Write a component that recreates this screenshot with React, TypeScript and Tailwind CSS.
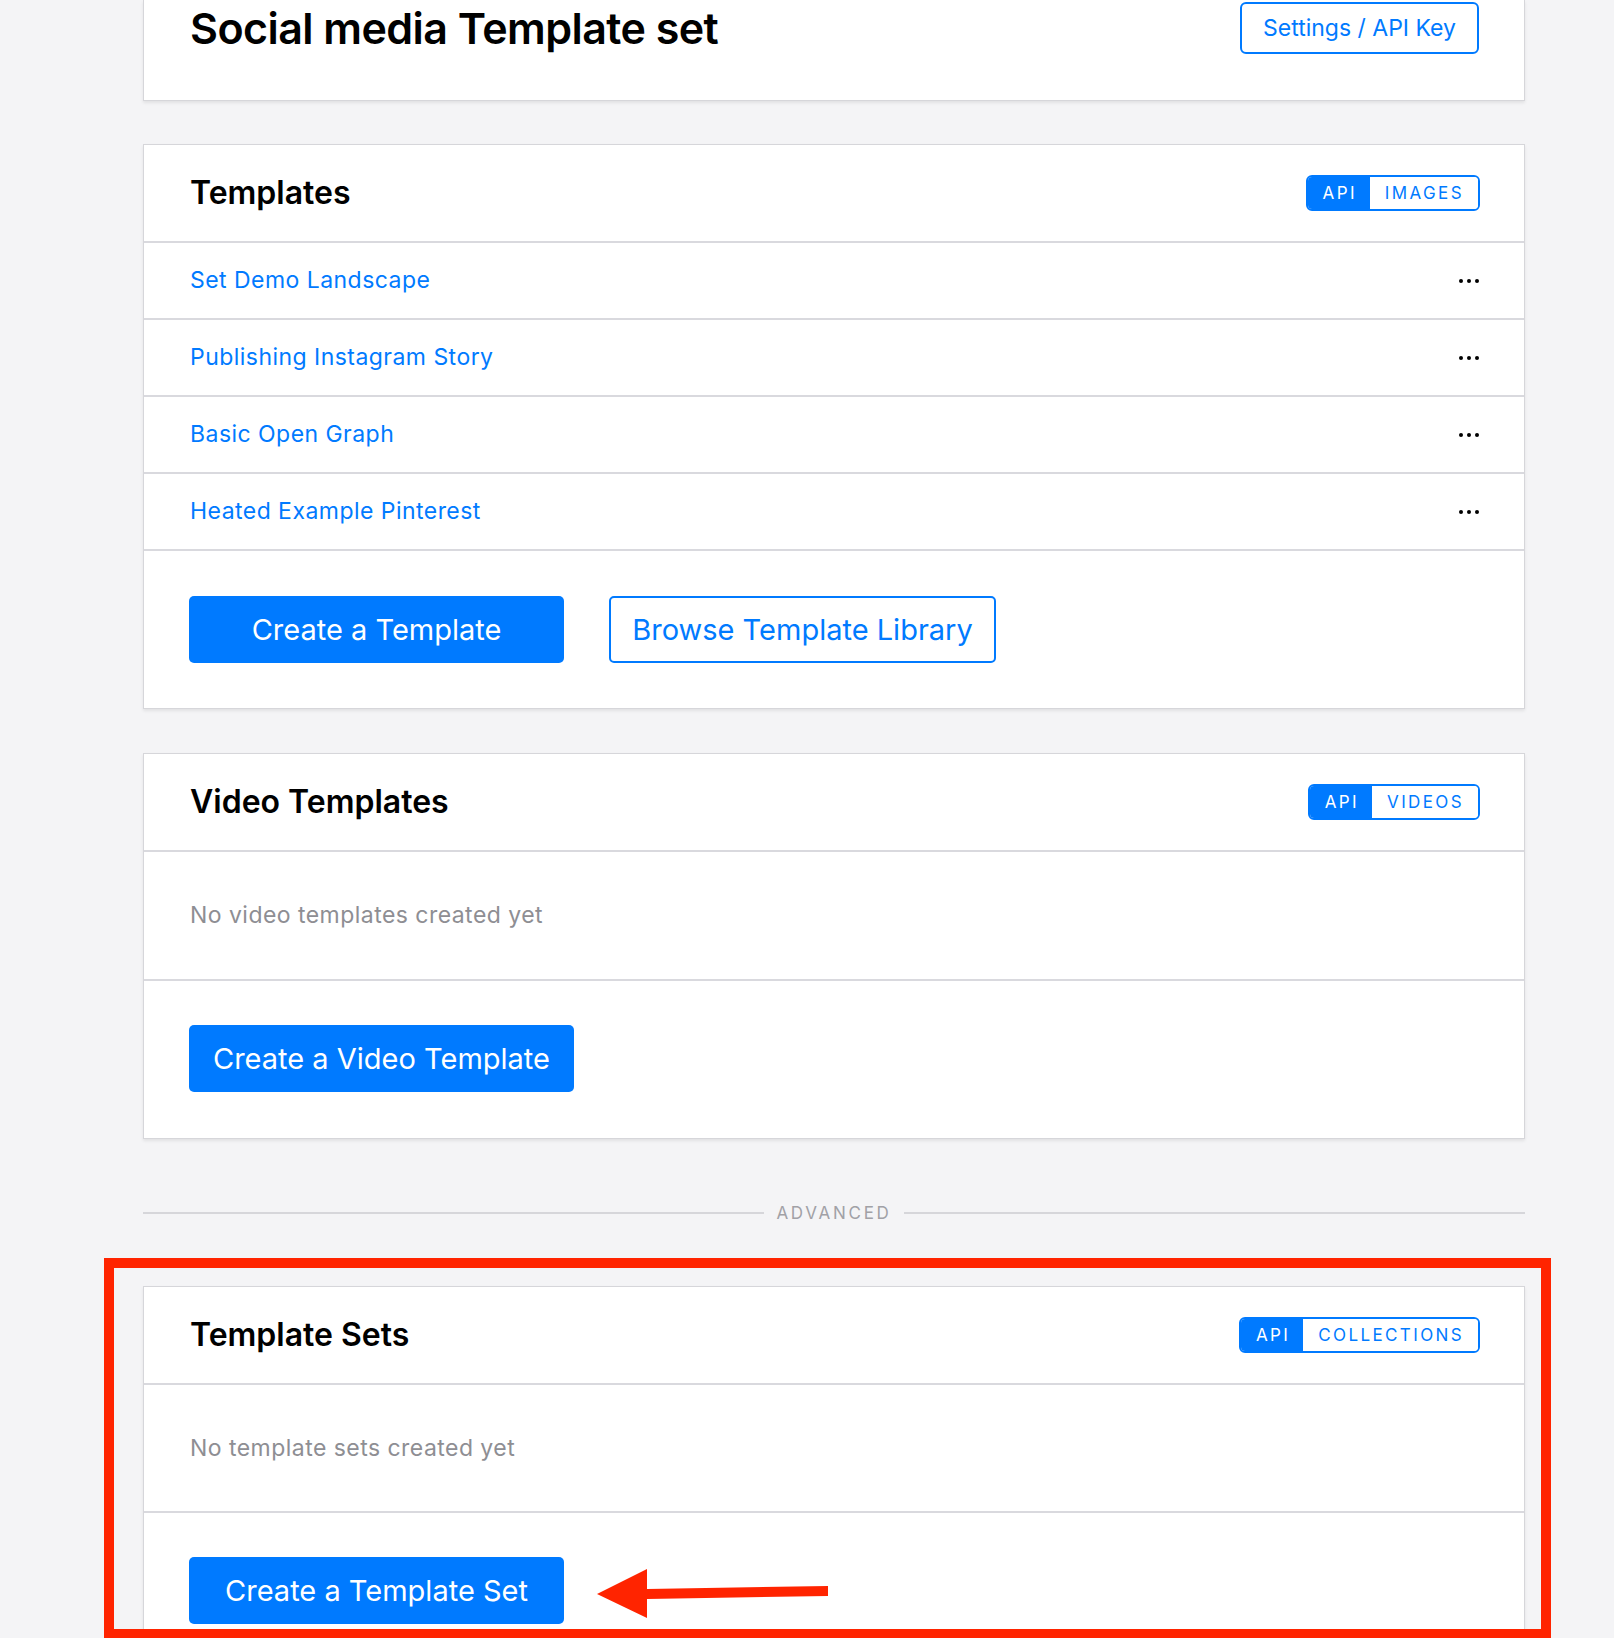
import React from "react";

const Dots = () => (
  <svg width="20" height="4" viewBox="0 0 20 4" className="shrink-0">
    <circle cx="2" cy="2" r="2" fill="#000" />
    <circle cx="10" cy="2" r="2" fill="#000" />
    <circle cx="18" cy="2" r="2" fill="#000" />
  </svg>
);

const Badge = ({ label }: { label: string }) => (
  <div className="flex h-[36px] items-stretch rounded-[6px] border-2 border-[#007aff] overflow-hidden text-[17px] tracking-[0.14em] leading-none">
    <div className="flex items-center bg-[#007aff] pl-[15px] pr-[13px] text-white">API</div>
    <div className="flex items-center bg-white pl-[15px] pr-[14px] text-[#007aff]">{label}</div>
  </div>
);

const CardHeader = ({ title, badge }: { title: string; badge: string }) => (
  <div className="flex h-[98px] items-center justify-between border-b-2 border-[#d9d9de] pl-[46px] pr-[44px]">
    <h2 className="text-[32px] font-semibold text-black">{title}</h2>
    <Badge label={badge} />
  </div>
);

const PrimaryButton = ({ children }: { children: React.ReactNode }) => (
  <button className="flex h-[67px] min-w-[375px] items-center justify-center rounded-[5px] bg-[#007aff] px-[24px] text-[29px] text-white">
    {children}
  </button>
);

const Card = ({ children }: { children: React.ReactNode }) => (
  <div className="ml-[143px] w-[1382px] border border-[#d6d6da] bg-white shadow-[0_2px_3px_rgba(0,0,0,0.08)]">
    {children}
  </div>
);

const templates = [
  "Set Demo Landscape",
  "Publishing Instagram Story",
  "Basic Open Graph",
  "Heated Example Pinterest",
];

export default function App() {
  return (
    <div className="relative h-[1638px] overflow-hidden bg-[#f4f4f6] font-[family-name:Inter,sans-serif]">
      {/* top card */}
      <div className="ml-[143px] w-[1382px] h-[101px] border border-t-0 border-[#d6d6da] bg-white shadow-[0_2px_3px_rgba(0,0,0,0.08)]">
        <div className="flex h-[56px] items-center justify-between pl-[46px] pr-[45px]">
          <h1 className="text-[43px] font-semibold tracking-[-0.013em] text-black">Social media Template set</h1>
          <button className="flex h-[52px] w-[239px] items-center justify-center rounded-[6px] border-2 border-[#007aff] text-[23px] text-[#007aff]">
            Settings / API Key
          </button>
        </div>
      </div>

      {/* Templates */}
      <div className="mt-[43px]">
        <Card>
          <CardHeader title="Templates" badge="IMAGES" />
          {templates.map((t) => (
            <div key={t} className="flex h-[77px] items-center justify-between border-b-2 border-[#d9d9de] pl-[46px] pr-[45px]">
              <span className="text-[23px] tracking-[0.02em] text-[#007aff]">{t}</span>
              <Dots />
            </div>
          ))}
          <div className="flex items-center gap-[45px] pl-[45px] pt-[45px] pb-[45px]">
            <PrimaryButton>Create a Template</PrimaryButton>
            <button className="flex h-[67px] w-[387px] items-center justify-center rounded-[5px] border-2 border-[#007aff] bg-white text-[29px] text-[#007aff]">
              Browse Template Library
            </button>
          </div>
        </Card>
      </div>

      {/* Video Templates */}
      <div className="mt-[44px]">
        <Card>
          <CardHeader title="Video Templates" badge="VIDEOS" />
          <div className="flex h-[129px] items-center border-b-2 border-[#d9d9de] pl-[46px]">
            <span className="text-[23px] tracking-[0.02em] text-[#8e8e93]">No video templates created yet</span>
          </div>
          <div className="flex pl-[45px] pt-[44px] pb-[46px]">
            <PrimaryButton>Create a Video Template</PrimaryButton>
          </div>
        </Card>
      </div>

      {/* Advanced divider */}
      <div className="ml-[143px] mt-[62px] flex w-[1382px] items-center gap-[12px]">
        <div className="h-[2px] flex-1 bg-[#d6d6da]" />
        <span className="text-[17px] leading-[24px] tracking-[0.16em] text-[#a1a1a6]">ADVANCED</span>
        <div className="h-[2px] flex-1 bg-[#d6d6da]" />
      </div>

      {/* Template Sets */}
      <div className="mt-[61px]">
        <Card>
          <CardHeader title="Template Sets" badge="COLLECTIONS" />
          <div className="flex h-[128px] items-center border-b-2 border-[#d9d9de] pl-[46px]">
            <span className="text-[23px] tracking-[0.02em] text-[#8e8e93]">No template sets created yet</span>
          </div>
          <div className="flex pl-[45px] pt-[44px] pb-[45px]">
            <PrimaryButton>Create a Template Set</PrimaryButton>
          </div>
        </Card>
      </div>

      {/* annotation: red box */}
      <div className="pointer-events-none absolute left-[104px] top-[1258px] h-[381px] w-[1447px] border-[10px] border-[#ff2400]" />
      {/* annotation: red arrow */}
      <svg className="pointer-events-none absolute left-[597px] top-[1569px]" width="231" height="50" viewBox="0 0 231 50">
        <polygon points="0,25 50,0 50,20 231,17 231,27 50,30 50,49" fill="#ff2400" />
      </svg>
    </div>
  );
}
